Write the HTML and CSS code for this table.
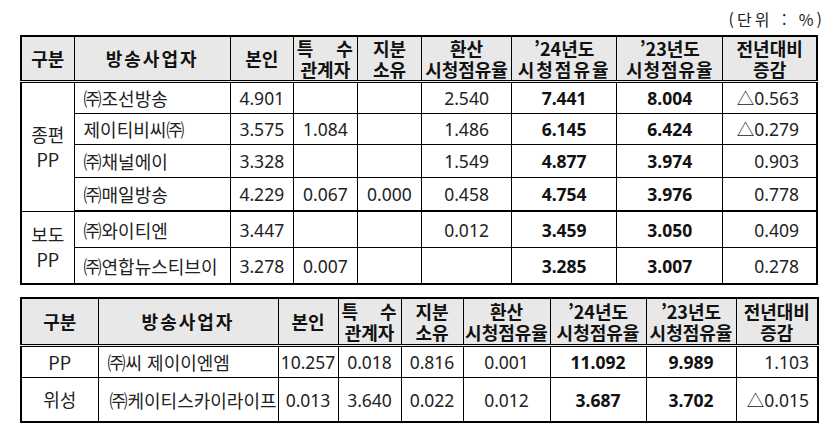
FILE: index.html
```html
<!DOCTYPE html>
<html lang="ko">
<head>
<meta charset="utf-8">
<link rel="stylesheet" href="styles.css">
</head>
<body>
<div class="page">
  <div class="unit">(단위 : %)</div>
  <table class="grid t1">
    <colgroup>
      <col style="width:53px"><col style="width:156px"><col style="width:63px"><col style="width:64px"><col style="width:64px"><col style="width:90px"><col style="width:105px"><col style="width:106px"><col style="width:94px">
    </colgroup>
    <thead>
      <tr class="head">
        <th>구분</th>
        <th class="wide">방송사업자</th>
        <th>본인</th>
        <th><span class="just"><span>특</span><span>수</span></span>관계자</th>
        <th>지분<br>소유</th>
        <th>환산<br>시청점유율</th>
        <th>’24년도<br><span class="sp">시청점유율</span></th>
        <th>’23년도<br><span class="sp1">시청점유율</span></th>
        <th>전년대비<br>증감</th>
      </tr>
    </thead>
    <tbody>
      <tr class="r1">
        <td class="grp" rowspan="4">종편<br>PP</td>
        <td class="name">㈜조선방송</td><td>4.901</td><td></td><td></td><td>2.540</td><td class="b">7.441</td><td class="b">8.004</td><td class="diff">△0.563</td>
      </tr>
      <tr class="r1">
        <td class="name">제이티비씨㈜</td><td>3.575</td><td>1.084</td><td></td><td>1.486</td><td class="b">6.145</td><td class="b">6.424</td><td class="diff">△0.279</td>
      </tr>
      <tr class="r2">
        <td class="name">㈜채널에이</td><td>3.328</td><td></td><td></td><td>1.549</td><td class="b">4.877</td><td class="b">3.974</td><td class="diff">0.903</td>
      </tr>
      <tr class="r2 sep">
        <td class="name">㈜매일방송</td><td>4.229</td><td>0.067</td><td>0.000</td><td>0.458</td><td class="b">4.754</td><td class="b">3.976</td><td class="diff">0.778</td>
      </tr>
      <tr class="r3">
        <td class="grp" rowspan="2">보도<br>PP</td>
        <td class="name">㈜와이티엔</td><td>3.447</td><td></td><td></td><td>0.012</td><td class="b">3.459</td><td class="b">3.050</td><td class="diff">0.409</td>
      </tr>
      <tr class="r3">
        <td class="name">㈜연합뉴스티브이</td><td>3.278</td><td>0.007</td><td></td><td></td><td class="b">3.285</td><td class="b">3.007</td><td class="diff">0.278</td>
      </tr>
    </tbody>
  </table>

  <table class="grid t2">
    <colgroup>
      <col style="width:77px"><col style="width:180px"><col style="width:60px"><col style="width:63px"><col style="width:62px"><col style="width:87px"><col style="width:96px"><col style="width:90px"><col style="width:82px">
    </colgroup>
    <thead>
      <tr class="head2">
        <th>구분</th>
        <th class="wide">방송사업자</th>
        <th>본인</th>
        <th><span class="just"><span>특</span><span>수</span></span>관계자</th>
        <th>지분<br>소유</th>
        <th>환산<br>시청점유율</th>
        <th>’24년도<br>시청점유율</th>
        <th>’23년도<br>시청점유율</th>
        <th>전년대비<br>증감</th>
      </tr>
    </thead>
    <tbody>
      <tr class="s1">
        <td class="grp">PP</td><td class="name">㈜씨 제이이엔엠</td><td>10.257</td><td>0.018</td><td>0.816</td><td>0.001</td><td class="b">11.092</td><td class="b">9.989</td><td class="diff2">1.103</td>
      </tr>
      <tr class="s2">
        <td class="grp">위성</td><td class="name n2">㈜케이티스카이라이프</td><td>0.013</td><td>3.640</td><td>0.022</td><td>0.012</td><td class="b">3.687</td><td class="b">3.702</td><td class="diff2">△0.015</td>
      </tr>
    </tbody>
  </table>
</div>
</body>
</html>
```

FILE: styles.css
```css
html, body {
  margin: 0;
  padding: 0;
  background: #ffffff;
}

body {
  font-family: "Noto Sans", "Noto Sans CJK KR", sans-serif;
  color: #1a1a1a;
  width: 833px;
  height: 433px;
  overflow: hidden;
}

.page {
  padding: 8px 0 0 20px;
}

.unit {
  width: 805px;
  text-align: right;
  font-size: 16px;
  line-height: 22px;
  height: 27px;
  font-family: "Noto Sans CJK KR", sans-serif;
  color: #222;
  letter-spacing: 3px;
  word-spacing: 2px;
}

.grid {
  border-collapse: collapse;
  table-layout: fixed;
  border: 2px solid #000;
}

.t1 {
  width: 798px;
}

.t2 {
  width: 797px;
  margin-top: 12px;
}

.grid th,
.grid td {
  border: 1px solid #000;
  padding: 0;
  font-size: 17.5px;
  text-align: center;
  vertical-align: middle;
  white-space: nowrap;
}

.grid th {
  background: #e8e8e8;
  font-family: "Noto Sans CJK KR", sans-serif;
  font-size: 18px;
  font-weight: 700;
  line-height: 21px;
  border-bottom: 3px double #000;
  color: #111;
}

.grid th.wide {
  letter-spacing: 2px;
}

.sp {
  letter-spacing: 2px;
}

.sp1 {
  letter-spacing: 1px;
}

.just {
  display: flex;
  justify-content: space-between;
  padding: 0 4px 0 3px;
}

.head th {
  height: 43px;
}

.head2 th {
  height: 45px;
}

.grid td {
  line-height: 22px;
  color: #222;
}

.grid td.name {
  text-align: left;
  padding-left: 9px;
  font-family: "Noto Sans CJK KR", sans-serif;
  font-size: 18px;
}

.grid td.n2 {
  padding-left: 11px;
}

.grid td.grp {
  line-height: 25px;
  font-family: "Noto Sans CJK KR", sans-serif;
  font-size: 18px;
}

.grid td.b {
  font-weight: 700;
  color: #111;
}

.grid td.diff {
  text-align: right;
  padding-right: 17px;
}

.grid td.diff2 {
  text-align: right;
  padding-right: 8px;
}

.r1 td { height: 30px; }
.r2 td { height: 32px; }
.r3 td { height: 35px; }

.sep td {
  border-bottom: 2px solid #000;
}

.s1 td { height: 30px; }
.s2 td { height: 43px; }
```
